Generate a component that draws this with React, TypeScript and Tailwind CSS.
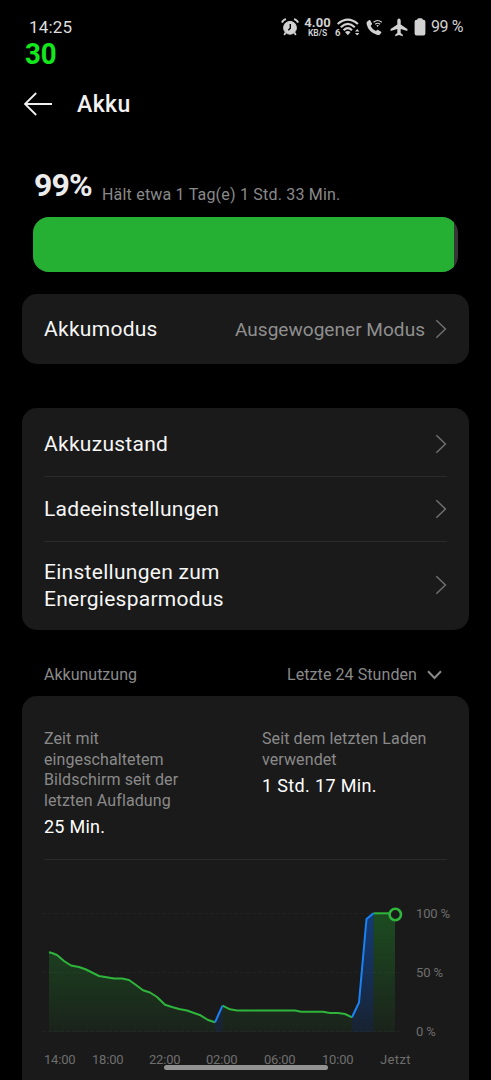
import type { ReactNode } from 'react';

type Point = [number, number];

const drain: Point[] = [
  [9, 52.3], [12, 53], [17, 55], [24, 61], [31, 65.5], [39, 67], [46, 69.5], [59, 76], [74, 78.5], [82, 78.5],
  [89, 80], [96, 85], [103, 90.3], [110, 92.5], [117, 97], [125, 104.7], [132, 107], [139, 109], [147, 110.5],
  [154, 113], [160.5, 115.3], [168, 120], [175, 122.3],
];
const nightCharge: Point[] = [[175, 122.3], [182.5, 105.7]];
const standby: Point[] = [
  [182.5, 105.7], [190, 109.3], [197, 110.5], [255, 110.5], [261, 111.7], [283, 111.7], [290, 113], [298, 113],
  [305, 114], [312, 117.3],
];
const fullCharge: Point[] = [[312, 117.3], [319, 102.5], [326.5, 19], [333.5, 13.3]];
const full: Point[] = [[333.5, 13.3], [355, 13.3]];

const BASE = 132;
const line = (p: Point[]) => 'M' + p.map(([x, y]) => `${x} ${y}`).join('L');
const area = (p: Point[]) => `${line(p)}V${BASE}H${p[0][0]}Z`;

function Chevron() {
  return (
    <svg width="12" height="20" viewBox="0 0 12 20" className="shrink-0" fill="none" stroke="#6f6f6f" strokeWidth="1.5">
      <path d="M1.3 1.2L10.4 10L1.3 18.8" />
    </svg>
  );
}

function Row({ children, value, className }: { children: ReactNode; value?: string; className: string }) {
  return (
    <div className={`flex items-center justify-between ${className}`}>
      <span className="pt-[2px] text-[21px] leading-[27.5px] font-[450] tracking-[0.28px] text-[#f6f6f6]">{children}</span>
      <span className="flex items-center gap-[10px]">
        {value && <span className="pt-[2px] text-[19px] tracking-[0.04px] text-[#8f8f8f]">{value}</span>}
        <Chevron />
      </span>
    </div>
  );
}

function StatusBar() {
  return (
    <div className="flex h-[42px] items-center pt-[12px] text-[#d2d2d2]">
      <span className="ml-[29px] w-[252px] text-[17px] leading-[30px] tracking-[0.17px] text-[#dedede]">14:25</span>
      <svg width="18" height="18" viewBox="0 0 18 18" fill="none" stroke="currentColor">
        <circle cx="9" cy="9.8" r="6.4" fill="currentColor" strokeWidth="1" />
        <path d="M1 4.6Q1.9 1.8 5 1.1M17 4.6Q16.1 1.8 13 1.1" strokeWidth="1.8" />
        <path d="M4.6 14.5L3.2 17M13.4 14.5L14.8 17" strokeWidth="1.7" />
        <path d="M9.3 6V10.3L7.3 12.3" stroke="#000" strokeWidth="1.4" />
      </svg>
      <span className="ml-[5px] flex w-[27px] flex-col items-center pt-[1px] font-bold">
        <span className="h-[10px] text-[13px] leading-[10px] tracking-[0.1px]">4.00</span>
        <span className="h-[9px] text-[8.5px] leading-[10px] font-semibold">KB/S</span>
      </span>
      <svg width="26" height="18" viewBox="0 0 26 18" className="ml-[4px]" fill="none" stroke="currentColor" strokeWidth="2.2">
        <path d="M2.7 6Q12.8 -2.6 22.9 6M5.8 9.2Q12.8 2.6 19.8 9.2M8.6 12.2Q12.8 8 17 12.2" />
        <path d="M10 14Q12.8 11.8 15.6 14L12.8 17.2Z" fill="currentColor" stroke="none" />
        <path d="M20 13.6L22.2 11L24.4 13.6ZM20 14.9L22.2 17.5L24.4 14.9Z" fill="currentColor" stroke="none" />
        <text x="0" y="17.5" fontSize="9.5" fontWeight="700" fill="currentColor" stroke="none">6</text>
      </svg>
      <svg width="17" height="17" viewBox="0 0 17 17" className="ml-[5px]" fill="none" stroke="currentColor">
        <path
          d="M1 2.8L3.2 1Q3.8 .7 4.2 1.3L6 4.5Q6.3 5.1 5.8 5.6L4.6 6.9Q6.2 10.3 9.9 12.1L11.2 10.9Q11.7 10.5 12.3 10.9L15 12.8Q15.7 13.4 15.2 14L13.6 15.7Q12.6 16.4 10.8 15.8Q2.2 12.8 .6 5Q.4 3.6 1 2.8Z"
          fill="currentColor"
          stroke="none"
        />
        <path d="M7.5 3.3Q11.6 -.3 15.8 3.3M9.2 5.3Q11.6 3.2 14.1 5.3" strokeWidth="1.2" />
        <path d="M10.3 6.5Q11.6 5.6 12.9 6.5L11.6 8Z" fill="currentColor" stroke="none" />
      </svg>
      <svg width="18" height="19" viewBox="0 0 18 19" className="ml-[7px]" fill="currentColor">
        <path d="M9 .4C10.1 .4 10.7 1.5 10.7 2.8V6.6L17.4 11V13L10.7 11V14.9L12.8 16.7V18.2L9 17.1L5.2 18.2V16.7L7.3 14.9V11L.6 13V11L7.3 6.6V2.8C7.3 1.5 7.9 .4 9 .4Z" />
      </svg>
      <svg width="12" height="18" viewBox="0 0 12 18" className="ml-[6px]" fill="currentColor">
        <path d="M3.2 1.8Q3.2 .3 4.5 .3H7.5Q8.8 .3 8.8 1.8H9.4Q11.4 1.8 11.4 3.8V15.4Q11.4 17.4 9.4 17.4H2.6Q.6 17.4 .6 15.4V3.8Q.6 1.8 2.6 1.8Z" />
      </svg>
      <span className="ml-[5px] text-[16px] leading-[30px] tracking-[-0.4px]">99 %</span>
    </div>
  );
}

function UsageChart() {
  return (
    <div className="-ml-1 flex">
      <svg width="364" height="144" viewBox="0 0 364 144" className="shrink-0" fill="none" strokeWidth="2" strokeLinejoin="round">
        <defs>
          <linearGradient id="greenFill" gradientUnits="userSpaceOnUse" x1="0" y1="13" x2="0" y2="132">
            <stop offset="0" stopColor="#20a52d" stopOpacity="0.36" />
            <stop offset="1" stopColor="#20a52d" stopOpacity="0.06" />
          </linearGradient>
          <linearGradient id="blueFill" gradientUnits="userSpaceOnUse" x1="0" y1="13" x2="0" y2="132">
            <stop offset="0" stopColor="#0a6cff" stopOpacity="0.42" />
            <stop offset="1" stopColor="#0a6cff" stopOpacity="0.1" />
          </linearGradient>
        </defs>
        <path d="M2 13.5H360M2 72.5H360M2 131.5H360" stroke="#212121" strokeWidth="1" strokeDasharray="4 2" />
        <path d={area(drain)} fill="url(#greenFill)" />
        <path d={area(nightCharge)} fill="url(#blueFill)" />
        <path d={area(standby)} fill="url(#greenFill)" />
        <path d={area(fullCharge)} fill="url(#blueFill)" />
        <path d={area(full)} fill="url(#greenFill)" />
        <path d={line(drain)} stroke="#2fb53c" />
        <path d={line(standby)} stroke="#2fb53c" />
        <path d={line(full)} stroke="#2fb53c" />
        <path d={line(nightCharge)} stroke="#1a82f7" />
        <path d={line(fullCharge)} stroke="#1a82f7" />
        <circle cx="355.3" cy="14.5" r="5.7" fill="#1a1a1a" stroke="#2fb53c" strokeWidth="2.6" />
      </svg>
      <div className="ml-[12px] flex h-[141px] flex-col justify-between pt-[4px] text-[13px] leading-[19px] tracking-[-0.15px] text-[#6e6e6e]">
        <span>100 %</span>
        <span>50 %</span>
        <span>0 %</span>
      </div>
    </div>
  );
}

export default function App() {
  return (
    <div className="relative flex h-[1080px] w-[491px] flex-col overflow-hidden bg-black font-['Roboto',sans-serif] whitespace-nowrap [&>*]:shrink-0">
      <StatusBar />
      <div className="ml-[25px] h-[24px] origin-left scale-x-[0.92] text-[30px] leading-[24px] font-bold text-[#12e81c]">
        30
      </div>

      <header className="mt-[22px] flex h-[32px] items-center">
        <svg width="30" height="24" viewBox="0 0 30 24" className="ml-[23px]" fill="none" stroke="#f0f0f0" strokeWidth="1.8">
          <path d="M13.2 1L2 12L13.2 23M2 12H29" />
        </svg>
        <h1 className="ml-[24px] pt-[1px] text-[23px] leading-[32px] font-medium tracking-[0.4px] text-[#f2f2f2]">Akku</h1>
      </header>

      <div className="mt-[45px] ml-[34px] flex h-[40px] items-start">
        <span className="w-[68px] text-[32px] leading-[40px] font-bold tracking-[-0.9px] text-[#ececec]">99%</span>
        <span className="pt-[20px] text-[16px] leading-[20px] tracking-[0.2px] text-[#8a8a8a]">
          Hält etwa 1 Tag(e) 1 Std. 33 Min.
        </span>
      </div>

      <div className="mt-[12px] ml-[33px] h-[55px] w-[425px] overflow-hidden rounded-[16px] bg-[#363636]">
        <div className="h-full w-[421px] bg-[#25b034]" />
      </div>

      <section className="mx-[22px] mt-[22px] h-[70px] rounded-[15px] bg-[#1a1a1a] px-[22px]">
        <Row className="h-[70px]" value="Ausgewogener Modus">Akkumodus</Row>
      </section>

      <section className="mx-[22px] mt-[44px] h-[222px] divide-y divide-[#2b2b2b] rounded-[15px] bg-[#1a1a1a] px-[22px]">
        <Row className="h-[69px] pt-[3px]">Akkuzustand</Row>
        <Row className="h-[65px]">Ladeeinstellungen</Row>
        <Row className="h-[86px]">
          Einstellungen zum
          <br />
          Energiesparmodus
        </Row>
      </section>

      <div className="mt-[35px] flex h-[20px] items-center justify-between pr-[49px] pl-[44px] text-[16px] leading-[20px] text-[#8a8a8a]">
        <span>Akkunutzung</span>
        <span className="flex items-center gap-[10px] tracking-[0.08px]">
          Letzte 24 Stunden
          <svg width="15" height="10" viewBox="0 0 15 10" fill="none" stroke="#8a8a8a" strokeWidth="2">
            <path d="M1 1.2L7.5 8L14 1.2" />
          </svg>
        </span>
      </div>

      <section className="mx-[22px] mt-[11px] h-[400px] rounded-t-[15px] bg-[#1a1a1a] px-[22px] pt-[33px]">
        <div className="flex h-[131px] border-b border-[#2b2b2b] text-[16px] leading-[20.5px] tracking-[0.1px] text-[#8a8a8a]">
          <div className="w-[218px]">
            <p>
              Zeit mit
              <br />
              eingeschaltetem
              <br />
              Bildschirm seit der
              <br />
              letzten Aufladung
            </p>
            <p className="mt-[4px] text-[18px] leading-[24px] font-[450] tracking-[0.25px] text-white">25 Min.</p>
          </div>
          <div>
            <p>
              Seit dem letzten Laden
              <br />
              verwendet
            </p>
            <p className="mt-[4px] text-[18px] leading-[24px] font-[450] tracking-[0.35px] text-white">1 Std. 17 Min.</p>
          </div>
        </div>
        <div className="pt-[40px]">
          <UsageChart />
        </div>
        <div className="mt-[6px] flex text-[13px] leading-[20px] tracking-[-0.2px] text-[#6e6e6e]">
          <span className="w-[48px]">14:00</span>
          <span className="w-[57px]">18:00</span>
          <span className="w-[57px]">22:00</span>
          <span className="w-[58px]">02:00</span>
          <span className="w-[58px]">06:00</span>
          <span className="w-[58px]">10:00</span>
          <span className="tracking-[0.4px]">Jetzt</span>
        </div>
      </section>

      <div className="absolute top-[1065px] left-[164px] h-[5px] w-[164px] rounded-full bg-[#929292]" />
    </div>
  );
}
